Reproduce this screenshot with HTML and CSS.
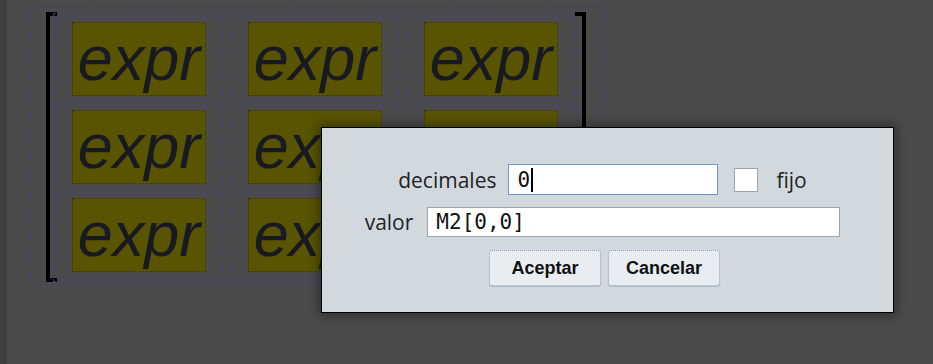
FILE: index.html
```html
<!DOCTYPE html>
<html lang="es">
  <head>
    <meta charset="UTF-8" />
    <meta name="viewport" content="width=device-width, initial-scale=1.0" />
    <title>Editar matriz</title>
    <link rel="stylesheet" href="styles.css">
  </head>
  <body>
    <div class="page">
      <div class="rail"></div>

      <div class="workspace">
        <div class="matrix-frame">
          <div class="bracket left"></div>
          <div class="matrix">
            <div class="cell"><div class="expr">expr</div></div>
            <div class="cell"><div class="expr">expr</div></div>
            <div class="cell"><div class="expr">expr</div></div>
            <div class="cell"><div class="expr">expr</div></div>
            <div class="cell"><div class="expr">expr</div></div>
            <div class="cell"><div class="expr">expr</div></div>
            <div class="cell"><div class="expr">expr</div></div>
            <div class="cell"><div class="expr">expr</div></div>
            <div class="cell"><div class="expr">expr</div></div>
          </div>
          <div class="bracket right"></div>
        </div>
      </div>
    </div>

    <div class="dialog">
      <div class="row">
        <label class="label">decimales</label>
        <div class="field focused small">0<span class="caret"></span></div>
        <div class="checkbox"></div>
        <span class="label fijo">fijo</span>
      </div>
      <div class="row">
        <label class="label">valor</label>
        <div class="field wide">M2[0,0]</div>
      </div>
      <div class="row buttons">
        <button>Aceptar</button>
        <button>Cancelar</button>
      </div>
    </div>
  </body>
</html>
```

FILE: styles.css
```css
body {
  margin: 0;
  padding: 0;
  background-color: #4b4b4b;
  font-family: "Open Sans", sans-serif;
  overflow: hidden;
}
.page {
  display: flex;
  height: 364px;
}
.rail {
  width: 7px;
  background-color: #3f3f3f;
}
.workspace {
  flex: 1;
  padding: 7px 0 0 23px;
}
.matrix-frame {
  display: inline-flex;
  border: 1px dashed #40407a;
  padding: 4px 17px 2px 15px;
}
.bracket {
  width: 7px;
  border: 4px solid #000;
}
.bracket.left {
  border-right: none;
  margin-right: -4px;
}
.bracket.right {
  border-left: none;
  margin-left: -2px;
}
.matrix {
  display: grid;
  grid-template-columns: repeat(3, 168px);
  gap: 4px 8px;
  border: 1px dashed #40407a;
  padding: 3px 1px 4px 1px;
  margin-top: 1px;
}
.cell {
  border: 1px dashed #40407a;
  padding: 4px 16px;
}
.expr {
  height: 72px;
  background-color: #585400;
  border: 1px dotted #35331a;
  color: #171a22;
  font-family: "Liberation Sans", Arial, sans-serif;
  font-style: italic;
  font-size: 63px;
  line-height: 71px;
  text-align: center;
}
.dialog {
  position: absolute;
  left: 321px;
  top: 127px;
  width: 573px;
  height: 186px;
  box-sizing: border-box;
  background-color: #d1d9df;
  border: 1px solid #000;
  box-shadow: 0 0 10px 3px rgba(0, 0, 0, 0.35);
  display: flex;
  flex-direction: column;
  align-items: center;
  padding: 36px 10px 0 0;
}
.row {
  display: flex;
  align-items: center;
  margin-bottom: 12px;
}
.label {
  font-size: 21px;
  line-height: 26px;
  color: #222;
}
.field {
  box-sizing: border-box;
  background-color: #fff;
  border: 1px solid #9aa5ae;
  font-family: "DejaVu Sans Mono", monospace;
  font-size: 21px;
  color: #111;
  padding: 0 8px;
  display: flex;
  align-items: center;
}
.field.small {
  width: 210px;
  height: 31px;
  margin-left: 12px;
}
.field.focused {
  border-color: #6f95cf;
}
.field.wide {
  width: 413px;
  height: 30px;
  margin-left: 14px;
}
.caret {
  display: inline-block;
  width: 2px;
  height: 24px;
  background-color: #000;
  margin-left: 1px;
}
.checkbox {
  width: 22px;
  height: 22px;
  background-color: #fff;
  border: 1px solid #9aa5ae;
  margin-left: 16px;
}
.fijo {
  margin-left: 18px;
}
.buttons {
  gap: 7px;
  margin: 1px 0 0 4px;
}
.buttons button {
  width: 112px;
  height: 36px;
  background-color: #e9edf1;
  border: 1px dotted #7f97c0;
  border-radius: 3px;
  box-shadow: 0 1px 1px rgba(0, 0, 0, 0.15);
  font-family: "Liberation Sans", Arial, sans-serif;
  font-weight: bold;
  font-size: 18px;
  color: #111;
  cursor: pointer;
}
```
